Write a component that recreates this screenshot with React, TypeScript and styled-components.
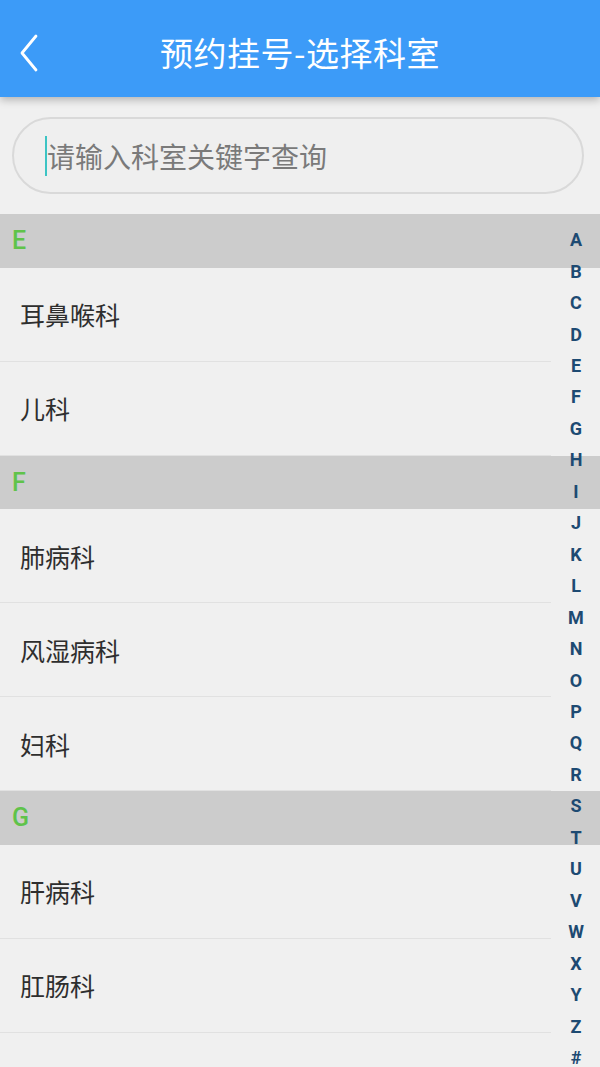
import React from 'react'
import styled, { createGlobalStyle } from 'styled-components'

const GlobalStyle = createGlobalStyle`
  html, body {
    margin: 0;
    padding: 0;
    background: #f0f0f0;
  }
  body {
    font-family: Roboto, "Noto Sans CJK SC", sans-serif;
    overflow: hidden;
  }
`

const Page = styled.div`
  width: 600px;
  height: 1067px;
  overflow: hidden;
  background: #f0f0f0;
`

const Header = styled.header`
  position: relative;
  z-index: 2;
  height: 97px;
  background: #3c9bf8;
  display: flex;
  align-items: center;
  justify-content: center;
  box-shadow: 0 3px 8px rgba(0, 0, 0, 0.25);
`

const BackButton = styled.button`
  position: absolute;
  left: 14px;
  top: 30px;
  width: 30px;
  height: 46px;
  padding: 0;
  border: none;
  background: none;
  display: flex;
  align-items: center;
  justify-content: center;
`

const Title = styled.h1`
  margin: 6px 0 0;
  color: #fff;
  font-family: "Noto Sans CJK SC", sans-serif;
  font-size: 33px;
  font-weight: 400;
  letter-spacing: 0.5px;
`

const SearchWrap = styled.div`
  padding: 20px 16px 20px 12px;
`

const SearchBox = styled.div`
  height: 73px;
  border: 2px solid #d9d9d9;
  border-radius: 40px;
  background: #efefef;
  display: flex;
  align-items: center;
  padding-left: 31px;
`

const Caret = styled.span`
  width: 2px;
  height: 40px;
  background: #3cc4c4;
`

const Placeholder = styled.span`
  color: #7a7a7a;
  font-family: "Noto Sans CJK SC", sans-serif;
  font-size: 28px;
  line-height: 1;
`

const List = styled.div`
  position: relative;
`

const SectionHeader = styled.div`
  height: 53.5px;
  background: #cccccc;
  display: flex;
  align-items: center;
  padding-left: 12px;
  color: #5fc34a;
  font-family: Roboto, sans-serif;
  font-size: 25px;
  font-weight: 500;
`

const Row = styled.div`
  height: 93px;
  margin-right: 49px;
  border-bottom: 1px solid #e1e1e1;
  display: flex;
  align-items: center;
  padding-left: 20px;
  color: #2e2e2e;
  font-family: "Noto Sans CJK SC", sans-serif;
  font-size: 25px;
`

const IndexBar = styled.div`
  position: absolute;
  top: 10px;
  right: 0;
  width: 48px;
  display: flex;
  flex-direction: column;
`

const IndexLetter = styled.span`
  height: 31.46px;
  display: flex;
  align-items: center;
  justify-content: center;
  color: #1d4a72;
  font-family: Roboto, sans-serif;
  font-weight: 700;
  font-size: 18px;
`

const sections = [
  { letter: 'E', items: ['耳鼻喉科', '儿科'] },
  { letter: 'F', items: ['肺病科', '风湿病科', '妇科'] },
  { letter: 'G', items: ['肝病科', '肛肠科', '骨科'] },
]

const indexLetters = 'ABCDEFGHIJKLMNOPQRSTUVWXYZ#'.split('')

const App: React.FC = () => {
  return (
    <Page>
      <GlobalStyle />
      <Header>
        <BackButton aria-label='back'>
          <svg width='20' height='38' viewBox='0 0 20 38'>
            <polyline
              points='17,2 3,19 17,36'
              fill='none'
              stroke='#fff'
              strokeWidth='2.8'
              strokeLinecap='round'
              strokeLinejoin='round'
            />
          </svg>
        </BackButton>
        <Title>预约挂号-选择科室</Title>
      </Header>
      <SearchWrap>
        <SearchBox>
          <Caret />
          <Placeholder>请输入科室关键字查询</Placeholder>
        </SearchBox>
      </SearchWrap>
      <List>
        {sections.map((section) => (
          <React.Fragment key={section.letter}>
            <SectionHeader>{section.letter}</SectionHeader>
            {section.items.map((item) => (
              <Row key={item}>{item}</Row>
            ))}
          </React.Fragment>
        ))}
        <IndexBar>
          {indexLetters.map((l) => (
            <IndexLetter key={l}>{l}</IndexLetter>
          ))}
        </IndexBar>
      </List>
    </Page>
  )
}

export default App
